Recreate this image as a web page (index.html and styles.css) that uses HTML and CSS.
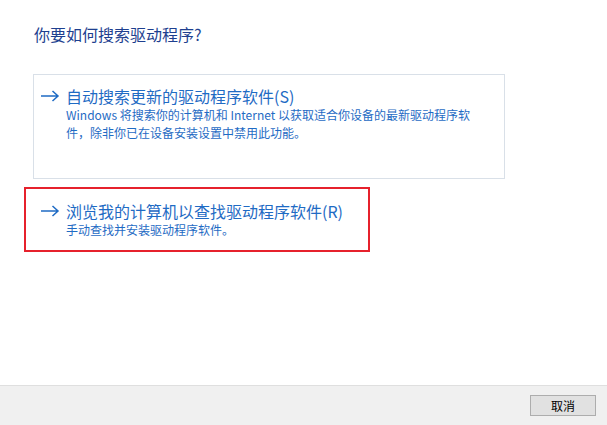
FILE: index.html
```html
<!DOCTYPE html>
<html lang="zh-CN">
<head>
  <meta charset="UTF-8" />
  <title>更新驱动程序</title>
  <link rel="stylesheet" href="styles.css">
</head>
<body>
  <div class="page">
    <main class="content">
      <h1 class="main-title">你要如何搜索驱动程序?</h1>

      <div class="option option-auto">
        <svg class="arrow" width="20" height="12" viewBox="0 0 20 12">
          <path d="M1 6 H18 M12.5 1 L18 6 L12.5 11" fill="none" stroke="#1f6bc4" stroke-width="1.5" />
        </svg>
        <div class="option-text">
          <div class="option-title">自动搜索更新的驱动程序软件(S)</div>
          <div class="option-desc">Windows 将搜索你的计算机和 Internet 以获取适合你设备的最新驱动程序软件，除非你已在设备安装设置中禁用此功能。</div>
        </div>
      </div>

      <div class="option option-browse">
        <svg class="arrow" width="20" height="12" viewBox="0 0 20 12">
          <path d="M1 6 H18 M12.5 1 L18 6 L12.5 11" fill="none" stroke="#1f6bc4" stroke-width="1.5" />
        </svg>
        <div class="option-text">
          <div class="option-title">浏览我的计算机以查找驱动程序软件(R)</div>
          <div class="option-desc">手动查找并安装驱动程序软件。</div>
        </div>
      </div>
    </main>

    <footer class="footer">
      <button class="btn">取消</button>
    </footer>
  </div>
</body>
</html>
```

FILE: styles.css
```css
* {
  margin: 0;
  padding: 0;
  box-sizing: border-box;
}
body {
  background: #fff;
  font-family: "Noto Sans CJK SC", "Noto Sans", sans-serif;
  color: #000;
}
.page {
  width: 607px;
  height: 425px;
  display: flex;
  flex-direction: column;
}
/* Content */
.content {
  flex: 1;
  padding: 23px 0 0 33px;
}
.main-title {
  font-size: 16px;
  font-weight: normal;
  line-height: 22px;
  color: #1e3f8f;
  margin-left: 1px;
}
.option {
  display: flex;
  align-items: flex-start;
}
.arrow {
  flex: none;
  width: 20px;
  margin-right: 6px;
}
.option-title {
  font-size: 16px;
  line-height: 20px;
  color: #1f6bc4;
  white-space: nowrap;
}
.option-desc {
  font-size: 12px;
  line-height: 18px;
  color: #1f6bc4;
}
.option-auto {
  margin-top: 29px;
  width: 472px;
  height: 105px;
  border: 1px solid #d9e0e8;
  padding: 11px 24px 0 6px;
}
.option-auto .arrow {
  margin-top: 4px;
}
.option-browse {
  margin: 8px 0 0 -9px;
  width: 346px;
  height: 65px;
  border: 2px solid #e6212c;
  padding: 12px 0 0 14px;
}
.option-browse .arrow {
  margin-top: 4px;
}
/* Footer */
.footer {
  height: 40px;
  background: #f0f0f0;
  border-top: 1px solid #dfdfdf;
  display: flex;
  justify-content: flex-end;
  padding: 9px 11px 0 0;
}
.btn {
  width: 66px;
  height: 21px;
  background: #e1e1e1;
  border: 1px solid #adadad;
  font-family: "Noto Sans CJK SC", sans-serif;
  font-size: 12px;
  line-height: 19px;
  color: #000;
}
```
